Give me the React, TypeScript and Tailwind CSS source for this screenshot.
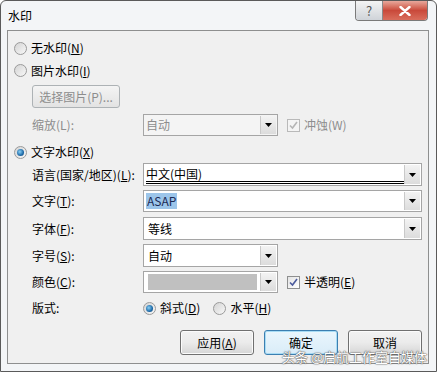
import React from 'react';

const font = { fontFamily: '"Noto Sans CJK SC", "Microsoft YaHei", sans-serif' };

const Radio = ({ checked }: { checked?: boolean }) => (
  <span className="flex h-[13px] w-[13px] shrink-0 items-center justify-center rounded-full border border-[#9a9a9a] bg-gradient-to-br from-[#d4d4d4] to-[#f8f8f8]">
    {checked && (
      <span className="h-[7px] w-[7px] rounded-full bg-[radial-gradient(circle_at_40%_40%,#8ad0f5,#1d6aa8_60%,#0f3f70)]" />
    )}
  </span>
);

const Check = ({ disabled }: { disabled?: boolean }) => (
  <span
    className={`flex h-[13px] w-[13px] shrink-0 items-center justify-center border ${
      disabled ? 'border-[#b9b9b9] bg-[#f4f4f4]' : 'border-[#8e8f8f] bg-gradient-to-br from-[#e4e4e4] to-white'
    }`}
  >
    <svg width="9" height="9" viewBox="0 0 9 9">
      <path
        d="M1 4.5 L3.5 7 L8 1"
        fill="none"
        stroke={disabled ? '#b5b5b5' : '#4a5a9c'}
        strokeWidth="1.6"
      />
    </svg>
  </span>
);

const Arrow = () => (
  <span className="flex h-full w-[16px] shrink-0 items-center justify-center border-l border-[#c9c9c9] bg-gradient-to-b from-[#f3f3f3] to-[#dcdcdc]">
    <svg width="7" height="4" viewBox="0 0 7 4">
      <path d="M0 0 H7 L3.5 4 Z" fill="#000" />
    </svg>
  </span>
);

const Combo = ({
  width,
  disabled,
  children,
}: {
  width: string;
  disabled?: boolean;
  children?: React.ReactNode;
}) => (
  <div
    className={`flex h-full ${width} items-stretch border border-[#a5a5a5] p-[1px] ${
      disabled ? 'bg-[#f4f4f4]' : 'bg-white'
    }`}
  >
    <div className="flex min-w-0 flex-1 items-center pl-[1px]">{children}</div>
    <Arrow />
  </div>
);

const Row = ({
  label,
  className,
  children,
  disabled,
}: {
  label: React.ReactNode;
  className: string;
  children: React.ReactNode;
  disabled?: boolean;
}) => (
  <div className={`flex items-center ${className}`}>
    <div
      className={`w-[135px] shrink-0 whitespace-nowrap pl-[24px] ${
        disabled ? 'text-[#8d8d8d]' : 'text-black'
      }`}
    >
      {label}
    </div>
    {children}
  </div>
);

const Button = ({ children, focus }: { children: React.ReactNode; focus?: boolean }) => (
  <div
    className={`flex h-[25px] w-[74px] items-center justify-center rounded-[3px] border ${
      focus
        ? 'border-[#3c7fb1] bg-gradient-to-b from-[#eaf6fd] to-[#d9ecf8] shadow-[inset_0_0_0_1px_#a8dcf5]'
        : 'border-[#707070] bg-gradient-to-b from-[#f2f2f2] via-[#ebebeb] to-[#d6d6d6] shadow-[inset_0_0_0_1px_#fbfbfb]'
    }`}
  >
    {children}
  </div>
);

export default function App() {
  return (
    <div
      className="relative flex h-[372px] w-[437px] flex-col overflow-hidden rounded-t-[6px] border border-[#5a5a5a] bg-[#f3f5f7] text-[12px] leading-none text-black"
      style={font}
    >
      {/* title bar */}
      <div className="flex h-[29px] shrink-0 items-start justify-between pl-[7px] pr-[8px]">
        <span className="mt-[9px] text-[12px]">水印</span>
        <div className="flex h-[20px] overflow-hidden rounded-b-[4px] border border-t-0 border-[#7a7a7a]">
          <div className="flex w-[27px] items-center justify-center border-r border-[#8a8a8a] bg-gradient-to-b from-[#f4f4f4] to-[#cfd3d8] text-[13px] text-[#555]">
            ?
          </div>
          <div className="flex w-[44px] items-center justify-center bg-gradient-to-b from-[#e7a89c] via-[#c9493a] to-[#d96d5c]">
            <svg width="12" height="10" viewBox="0 0 12 10">
              <path d="M1.5 1 L10.5 9 M10.5 1 L1.5 9" stroke="#fff" strokeWidth="2.4" strokeLinecap="round" />
            </svg>
          </div>
        </div>
      </div>

      {/* panel */}
      <div className="ml-[6px] mr-[7px] flex h-[334px] flex-col border border-[#8e8f8f] bg-[#f0f0f0]">
        <div className="mt-[6px] flex h-[22px] items-center gap-[4px] pl-[6px]">
          <Radio />
          <span>
            无水印(<u>N</u>)
          </span>
        </div>
        <div className="flex h-[23px] items-center gap-[4px] pl-[6px]">
          <Radio />
          <span>
            图片水印(<u>I</u>)
          </span>
        </div>
        <div className="mt-[3px] flex h-[23px] pl-[24px]">
          <div className="flex w-[88px] items-center justify-center rounded-[3px] border border-[#adb2b5] bg-gradient-to-b from-[#f4f4f4] to-[#e3e3e3] text-[#8d8d8d]">
            选择图片(P)...
          </div>
        </div>
        <Row label="缩放(L):" className="mt-[6px] h-[22px]" disabled>
          <Combo width="w-[135px]" disabled>
            <span className="text-[#8d8d8d]">自动</span>
          </Combo>
          <div className="ml-[9px] flex items-center gap-[4px] text-[#8d8d8d]">
            <Check disabled />
            <span>冲蚀(W)</span>
          </div>
        </Row>
        <div className="mt-[5px] flex h-[22px] items-center gap-[4px] pl-[6px]">
          <Radio checked />
          <span>
            文字水印(<u>X</u>)
          </span>
        </div>
        <Row
          label={
            <>
              语言(国家/地区)(<u>L</u>):
            </>
          }
          className="h-[23px]"
        >
          <Combo width="w-[279px]">
            <span className="flex h-full w-full flex-col justify-center border-b-[3px] border-double border-black pt-[2px]">
              中文(中国)
            </span>
          </Combo>
        </Row>
        <Row
          label={
            <>
              文字(<u>T</u>):
            </>
          }
          className="mt-[4px] h-[22px]"
        >
          <Combo width="w-[279px]">
            <span className="bg-[#9cc5ea] px-[1px] py-[2px] text-[#1b2a55]">ASAP</span>
          </Combo>
        </Row>
        <Row
          label={
            <>
              字体(<u>F</u>):
            </>
          }
          className="mt-[5px] h-[23px]"
        >
          <Combo width="w-[279px]">
            <span className="pl-[2px]">等线</span>
          </Combo>
        </Row>
        <Row
          label={
            <>
              字号(<u>S</u>):
            </>
          }
          className="mt-[4px] h-[23px]"
        >
          <Combo width="w-[135px]">
            <span className="pl-[2px]">自动</span>
          </Combo>
        </Row>
        <Row
          label={
            <>
              颜色(<u>C</u>):
            </>
          }
          className="mt-[4px] h-[22px]"
        >
          <Combo width="w-[135px]">
            <span className="ml-[2px] mr-[3px] h-[16px] flex-1 bg-[#c0c0c0]" />
          </Combo>
          <div className="ml-[9px] flex items-center gap-[4px]">
            <Check />
            <span>
              半透明(<u>E</u>)
            </span>
          </div>
        </Row>
        <Row label="版式:" className="mt-[4px] h-[22px]">
          <div className="flex items-center gap-[4px]">
            <Radio checked />
            <span>
              斜式(<u>D</u>)
            </span>
          </div>
          <div className="ml-[13px] flex items-center gap-[4px]">
            <Radio />
            <span>
              水平(<u>H</u>)
            </span>
          </div>
        </Row>
        <div className="mt-[11px] flex justify-end gap-[10px] pr-[6px]">
          <Button>
            应用(<u>A</u>)
          </Button>
          <Button focus>确定</Button>
          <Button>取消</Button>
        </div>
      </div>

      {/* watermark overlay */}
      <div
        className="absolute bottom-[8px] right-[9px] text-[13px] text-white"
        style={{ textShadow: '0 0 1px #555, 0 0 1px #555, 0 0 2px #777' }}
      >
        头条 @启航工作室自媒体
      </div>
    </div>
  );
}
